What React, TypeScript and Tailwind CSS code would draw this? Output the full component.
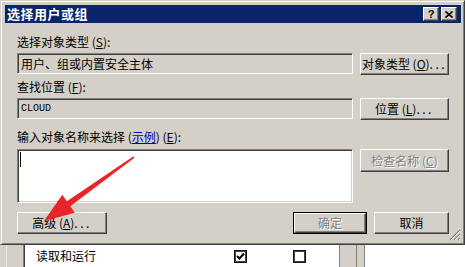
import React from "react";

const raised =
  "border border-t-white border-l-white border-r-[#404040] border-b-[#404040] shadow-[inset_-1px_-1px_0_#808080] bg-[#d4d0c8]";
const sunken =
  "border border-t-[#808080] border-l-[#808080] border-r-white border-b-white shadow-[inset_1px_1px_0_#404040,inset_-1px_-1px_0_#d4d0c8]";
const disabledText = "text-[#808080] [text-shadow:1px_1px_0_#ffffff]";

function Dots() {
  return <span className="tracking-[2.5px]">...</span>;
}

function CheckBox({ checked }: { checked: boolean }) {
  return (
    <div className="w-[13px] h-[13px] border border-[#111] shadow-[inset_1px_1px_0_#444,inset_-1px_-1px_0_#444] bg-white flex items-center justify-center">
      {checked && (
        <svg width="9" height="9" viewBox="0 0 9 9">
          <path d="M1 4 L3.5 6.5 L8 1.5" stroke="#000" strokeWidth="2" fill="none" />
        </svg>
      )}
    </div>
  );
}

export default function App() {
  return (
    <div className="relative w-[465px] h-[267px] overflow-hidden bg-[#d4d0c8] font-['Noto_Sans_CJK_SC','Noto_Sans_CJK_JP',sans-serif] text-[12px] text-black">
      {/* Dialog window */}
      <div className="relative w-[465px] h-[245px] border border-t-[#d4d0c8] border-l-[#d4d0c8] border-r-[#404040] border-b-[#404040] shadow-[inset_1px_1px_0_#ffffff,inset_-1px_-1px_0_#808080] pt-[4px] pl-[4px] pr-[3px] flex flex-col">
        {/* Title bar */}
        <div className="h-[18px] bg-[#0a246a] flex items-center pl-[2px] pr-[4px]">
          <span className="text-white font-bold text-[13px] leading-[18px] tracking-[0.5px]">选择用户或组</span>
          <div className="flex-1" />
          <div className="flex gap-[2px]">
            <div className={`${raised} w-[16px] h-[14px] flex items-center justify-center font-['Liberation_Sans',sans-serif] font-bold text-[11px] leading-none`}>
              ?
            </div>
            <div className={`${raised} w-[16px] h-[14px] flex items-center justify-center`}>
              <svg width="8" height="7" viewBox="0 0 8 7">
                <path d="M0.5 0.5 L7.5 6.5 M7.5 0.5 L0.5 6.5" stroke="#000" strokeWidth="1.6" />
              </svg>
            </div>
          </div>
        </div>

        {/* Body */}
        <div className="flex flex-col pl-[12px]">
          <div className="mt-[11px] h-[16px] leading-[16px]">
            选择对象类型 (<u>S</u>):
          </div>
          <div className="mt-[3px] flex items-start gap-[7px]">
            <div className={`${sunken} w-[336px] h-[21px] flex items-center pl-[3px] leading-none`}>
              用户、组或内置安全主体
            </div>
            <div className={`${raised} w-[89px] h-[22px] flex items-center justify-center leading-none`}>
              对象类型 (<u>O</u>)<Dots />
            </div>
          </div>

          <div className="mt-[4px] h-[16px] leading-[16px]">
            查找位置 (<u>F</u>):
          </div>
          <div className="mt-[3px] flex items-start gap-[7px]">
            <div className={`${sunken} w-[336px] h-[21px] flex items-center pl-[3px] leading-none font-['Liberation_Mono',monospace] text-[10px]`}>
              CLOUD
            </div>
            <div className={`${raised} w-[89px] h-[22px] flex items-center justify-center leading-none`}>
              位置 (<u>L</u>)<Dots />
            </div>
          </div>

          <div className="mt-[9px] h-[16px] leading-[16px]">
            输入对象名称来选择 (<span className="text-[#0000c0] underline">示例</span>) (<u>E</u>):
          </div>
          <div className="mt-[4px] flex items-start gap-[7px]">
            <div className={`${sunken} w-[336px] h-[54px] bg-white pl-[2px] pt-[2px]`}>
              <div className="w-[1px] h-[15px] bg-black" />
            </div>
            <div className={`${raised} ${disabledText} w-[89px] h-[23px] flex items-center justify-center leading-none`}>
              检查名称 (<u>C</u>)
            </div>
          </div>

          <div className="mt-[9px] flex items-start w-[432px]">
            <div className={`${raised} w-[90px] h-[22px] flex items-center justify-center leading-none`}>
              高级 (<u>A</u>)<Dots />
            </div>
            <div className="flex-1" />
            <div className="w-[74px] h-[22px] border border-black flex">
              <div className={`${raised} ${disabledText} flex-1 flex items-center justify-center leading-none`}>
                确定
              </div>
            </div>
            <div className={`${raised} ml-[7px] w-[75px] h-[22px] flex items-center justify-center leading-none`}>
              取消
            </div>
          </div>
        </div>

        {/* Resize grip */}
        <svg className="absolute right-[3px] bottom-[3px]" width="12" height="12" viewBox="0 0 12 12">
          <path d="M11 1 L1 11 M11 5 L5 11 M11 9 L9 11" stroke="#808080" strokeWidth="1.2" />
          <path d="M11 2 L2 11 M11 6 L6 11 M11 10 L10 11" stroke="#ffffff" strokeWidth="0.8" />
        </svg>
      </div>

      {/* Background window list */}
      <div className="flex h-[22px]">
        <div className="w-[23px] bg-[#d4d0c8] flex">
          <div className="ml-[6px] w-[1px] bg-[#e8e6e0]" />
        </div>
        <div className="w-[2px] bg-[#404040] border-l border-[#808080]" />
        <div className="flex-1 bg-white flex items-center">
          <div className="w-[209px] pl-[11px] leading-none">读取和运行</div>
          <div className="w-[59px]">
            <CheckBox checked />
          </div>
          <div className="w-[46px]">
            <CheckBox checked={false} />
          </div>
          <div className="self-stretch flex">
            <div className="w-[1px] bg-[#808080]" />
            <div className="w-[16px] bg-[#d4d0c8]" />
            <div className="w-[1px] bg-[#808080]" />
            <div className="w-[7px] bg-[#d4d0c8]" />
            <div className="w-[1px] bg-[#808080]" />
          </div>
        </div>
      </div>

      {/* Red annotation arrow */}
      <svg className="absolute left-0 top-0 pointer-events-none" width="465" height="267" viewBox="0 0 465 267">
        <polygon
          points="44,221 62.3,194.7 66.9,201.2 133.5,156.3 134.5,157.7 70.3,206.2 74.9,212.7"
          fill="#e8262a"
        />
      </svg>
    </div>
  );
}
